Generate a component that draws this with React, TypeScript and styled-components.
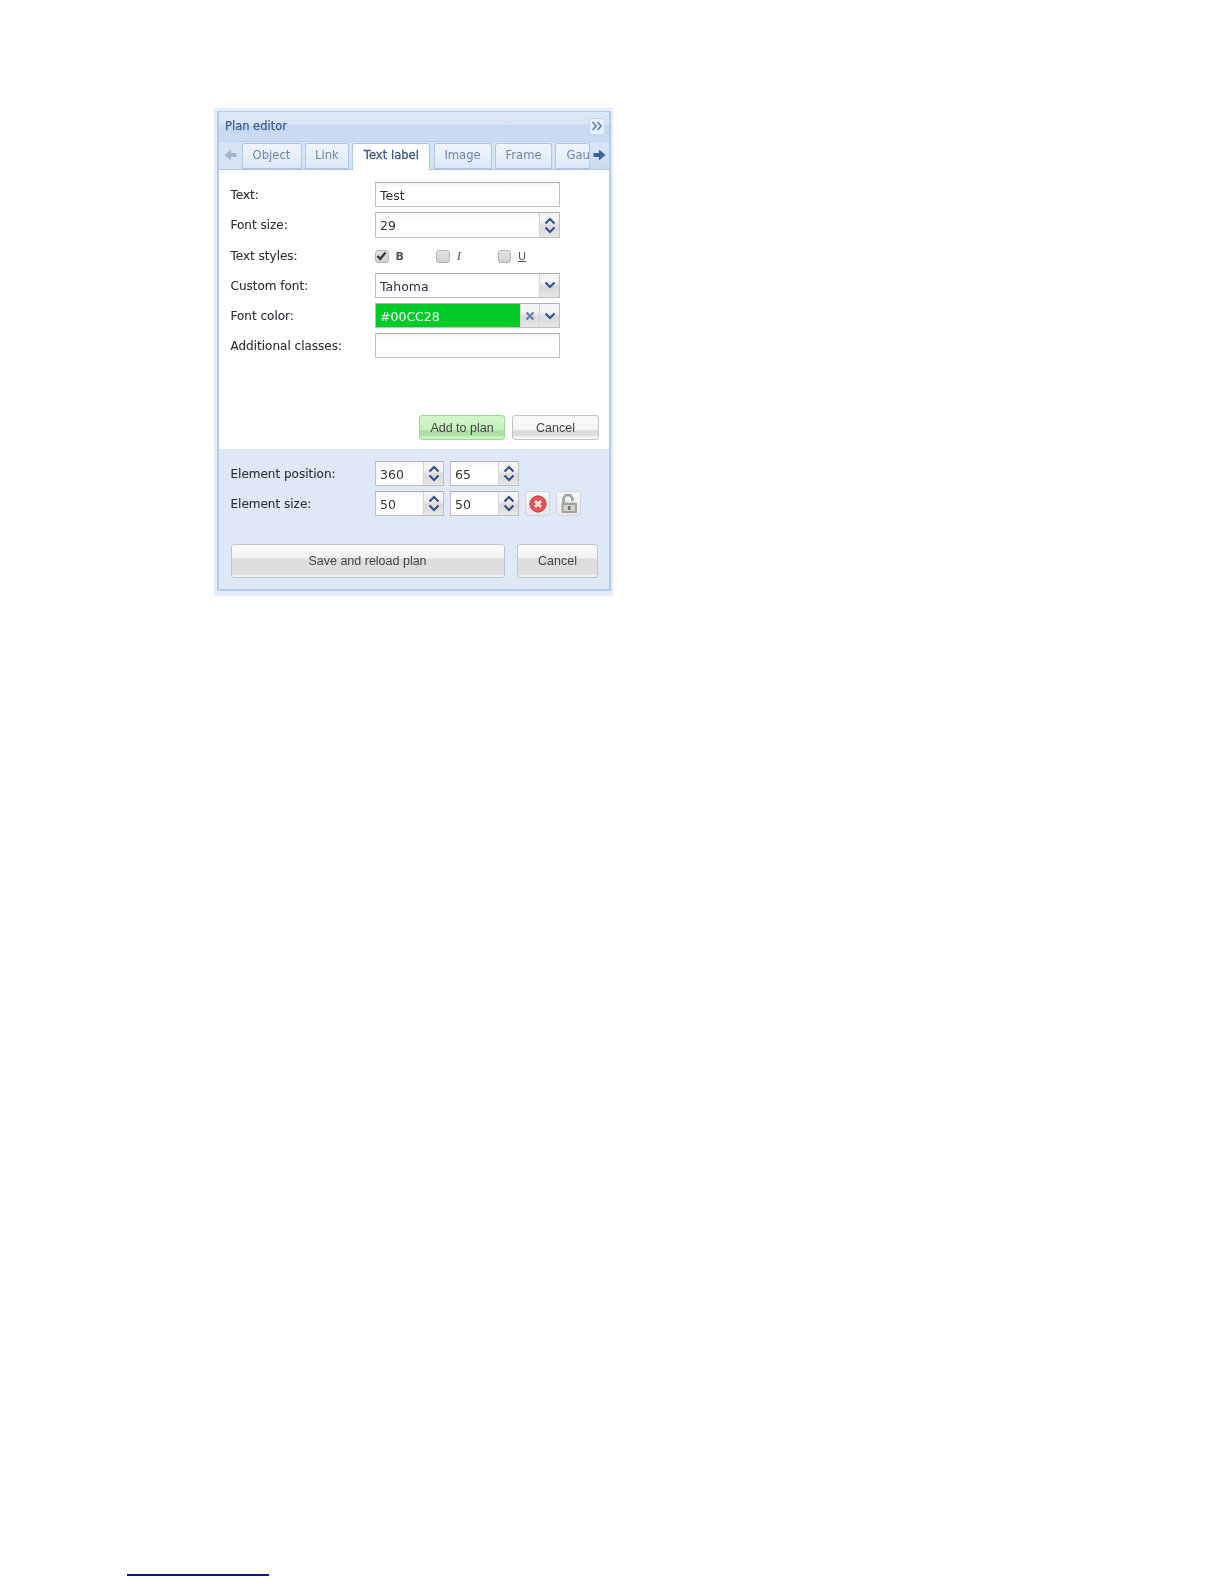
import React from "react";
import styled, { createGlobalStyle } from "styled-components";

const Global = createGlobalStyle`
  html, body { margin: 0; padding: 0; background: #fff; }
  body { font-family: "DejaVu Sans", sans-serif; }
`;

const Page = styled.div`
  width: 1224px;
  height: 1584px;
  padding: 107.5px 0 0 214px;
  box-sizing: border-box;
  position: relative;
  overflow: hidden;
  filter: blur(0.45px);
`;

const Halo = styled.div`
  width: 399px;
  height: 488.5px;
  box-sizing: border-box;
  padding: 3px 2px 5px 3px;
  background: #e4ecf8;
`;

const Panel = styled.div`
  height: 100%;
  box-sizing: border-box;
  border: 2px solid #b4cbea;
  border-top-width: 1px;
  display: flex;
  flex-direction: column;
  background: #fff;
`;

const Header = styled.div`
  height: 29.5px;
  flex: none;
  box-sizing: border-box;
  display: flex;
  align-items: center;
  justify-content: space-between;
  padding: 0 4px 0 6px;
  background: linear-gradient(#dde8f7 0%, #d8e5f6 42%, #c6d8f1 46%, #cbdcf2 100%);
`;

const Title = styled.span`
  font-size: 11.5px;
  color: #3d5f8f;
  -webkit-text-stroke: 0.25px #3d5f8f;
`;

const Collapse = styled.button`
  width: 16px;
  height: 17px;
  padding: 0;
  border: 1px solid #c5d7ee;
  border-radius: 2px;
  background: #e9f1fb;
  display: flex;
  align-items: center;
  justify-content: center;
`;

const TabStrip = styled.div`
  height: 29px;
  flex: none;
  box-sizing: border-box;
  border-top: 1px solid #c2d5ee;
  border-bottom: 1.5px solid #a9c4e8;
  background: #d6e3f5;
  display: flex;
  align-items: flex-end;
`;

const Scroller = styled.div<{ $right?: boolean }>`
  width: ${(p) => (p.$right ? 20 : 22.5)}px;
  height: 100%;
  box-sizing: border-box;
  flex: none;
  padding-bottom: 2px;
  display: flex;
  align-items: center;
  justify-content: center;
  border-left: ${(p) => (p.$right ? "1px solid #b1c9e9" : "none")};
  background: ${(p) => (p.$right ? "linear-gradient(#d9e6f7, #cbdcf2)" : "#d6e3f5")};
`;

const Tabs = styled.div`
  flex: 1;
  min-width: 0;
  display: flex;
  align-items: flex-end;
  gap: 3.2px;
`;

const Tab = styled.div<{ $active?: boolean; $w: number; $last?: boolean }>`
  width: ${(p) => p.$w}px;
  flex: none;
  height: ${(p) => (p.$active ? 28 : 26.5)}px;
  margin-bottom: ${(p) => (p.$active ? -1.5 : 0)}px;
  box-sizing: border-box;
  border: 1px solid #b1c9e9;
  border-bottom: ${(p) => (p.$active ? "none" : "1px solid #a9c4e8")};
  border-right: ${(p) => (p.$last ? "none" : "1px solid #b1c9e9")};
  border-radius: 3px 3px 0 0;
  background: ${(p) => (p.$active ? "#fff" : "linear-gradient(#f0f5fc, #dde8f7)")};
  color: ${(p) => (p.$active ? "#3b5a85" : "#6d87ab")};
  font-size: 11.6px;
  -webkit-text-stroke: ${(p) => (p.$active ? "0.3px #3b5a85" : "0")};
  white-space: nowrap;
  padding-left: ${(p) => (p.$last ? "10px" : "0")};
  text-align: ${(p) => (p.$last ? "left" : "center")};
  line-height: 23px;
`;

const Body = styled.div`
  flex: 1;
  min-height: 0;
  display: flex;
  flex-direction: column;
  padding: 12.3px 10px 8.7px 11.5px;
  background: #fff;
`;

const Form = styled.div`
  display: grid;
  grid-template-columns: 144.5px 185px;
  grid-auto-rows: 25.2px;
  row-gap: 5px;
`;

const Label = styled.div`
  font-size: 12px;
  color: #2b3138;
  -webkit-text-stroke: 0.12px #2b3138;
  line-height: 26px;
  white-space: nowrap;
`;

const Field = styled.div<{ $w?: number }>`
  width: ${(p) => (p.$w ? `${p.$w}px` : "100%")};
  height: 25.2px;
  box-sizing: border-box;
  border: 1px solid #c0c0c0;
  border-top-color: #b0b0b0;
  background: linear-gradient(#f3f3f3, #fff 5px);
  display: flex;
  align-items: stretch;
  flex: none;
`;

const Value = styled.div<{ $fill?: string }>`
  flex: 1;
  min-width: 0;
  padding-left: 4px;
  font-size: 12.5px;
  line-height: 25px;
  color: ${(p) => (p.$fill ? "#fff" : "#333")};
  background: ${(p) => p.$fill ?? "transparent"};
`;

const Side = styled.div<{ $w: number }>`
  width: ${(p) => p.$w}px;
  flex: none;
  box-sizing: border-box;
  border-left: 1px solid #d4d4d4;
  background: linear-gradient(#f4f4f4 35%, #dadada 55%, #e6e6e6);
  display: flex;
  flex-direction: column;
  align-items: center;
  justify-content: center;
  gap: 1px;
`;

const StyleRow = styled.div`
  display: flex;
  align-items: center;
  padding-top: 2px;
`;

const CheckItem = styled.div`
  width: 61.3px;
  display: flex;
  align-items: center;
  gap: 7px;
  font-size: 11px;
  color: #555;
`;

const Box = styled.span`
  width: 13.5px;
  height: 13.5px;
  box-sizing: border-box;
  border: 1px solid #b4b4b4;
  border-radius: 3px;
  background: linear-gradient(#e4e4e4, #d2d2d2);
  display: flex;
  align-items: center;
  justify-content: center;
`;

const ItalicMark = styled.i`
  font-family: "Liberation Serif", serif;
  font-size: 12.5px;
`;

const Actions = styled.div`
  margin-top: auto;
  display: flex;
  justify-content: flex-end;
  gap: 7px;
`;

const Button = styled.button<{ $w: number; $h: number; $green?: boolean; $tall?: boolean }>`
  width: ${(p) => p.$w}px;
  height: ${(p) => p.$h}px;
  padding: ${(p) => (p.$tall ? "0" : "1px 0 0")};
  box-sizing: border-box;
  border: 1px solid ${(p) => (p.$green ? "#9fd596" : "#c4c4c4")};
  border-radius: 3px;
  font: 12.5px "Liberation Sans", Arial, sans-serif;
  color: #444;
  background: ${(p) =>
    p.$green
      ? "linear-gradient(#d2f6ca 0%, #c6f2bc 60%, #a9dfa0 64%, #aee3a5 86%, #c8f4be 90%)"
      : p.$tall
        ? "linear-gradient(#fafafa 0%, #f2f2f2 40%, #dcdcdc 44%, #e0e0e0 92%, #f2f2f2 96%)"
        : "linear-gradient(#fafafa 0%, #f4f4f4 60%, #dadada 64%, #dcdcdc 86%, #f4f4f4 90%)"};
`;

const Footer = styled.div`
  height: 140px;
  flex: none;
  box-sizing: border-box;
  padding: 12px 11px 10.7px 11.5px;
  background: #dfe8f7;
  display: flex;
  flex-direction: column;
`;

const Coord = styled.div`
  display: flex;
  gap: 6px;
  align-items: center;
`;

const FooterForm = styled(Form)`
  grid-template-columns: 144.5px 1fr;
`;

const IconButton = styled.button`
  width: 25px;
  height: 25px;
  padding: 0;
  border: 1px solid #cfd6e0;
  border-radius: 3px;
  background: linear-gradient(#f6f6f6, #e6e8ec);
  display: flex;
  align-items: center;
  justify-content: center;
`;

const FooterActions = styled.div`
  margin-top: auto;
  display: flex;
  gap: 12.5px;
`;

const Rule = styled.div`
  position: absolute;
  left: 127px;
  top: 1574px;
  width: 142px;
  height: 2px;
  background: #14147e;
`;

const Chevron = ({ up }: { up?: boolean }) => (
  <svg width="12" height="8" viewBox="0 0 12 8">
    <path
      d={up ? "M1.5 6.5 6 2l4.5 4.5" : "M1.5 1.5 6 6l4.5-4.5"}
      fill="none"
      stroke="#34508f"
      strokeWidth="2.2"
    />
  </svg>
);

const Spinner = () => (
  <Side $w={20}>
    <Chevron up />
    <Chevron />
  </Side>
);

const Arrow = ({ right }: { right?: boolean }) => (
  <svg width="13" height="12" viewBox="0 0 13 12">
    <path
      d={right ? "M0.5 4H6V0.5L12.5 6 6 11.5V8H0.5z" : "M12.5 4H7V0.5L0.5 6 7 11.5V8h5.5z"}
      fill={right ? "#3f6299" : "#a3b5cc"}
    />
  </svg>
);

const Check = () => (
  <svg width="11" height="10" viewBox="0 0 11 10">
    <path d="M1.5 5 4.2 8 9.5 1.5" fill="none" stroke="#3a3a3a" strokeWidth="2.4" />
  </svg>
);

const Spin = ({ value }: { value: string }) => (
  <Field $w={69}>
    <Value>{value}</Value>
    <Spinner />
  </Field>
);

export default function App() {
  return (
    <Page>
      <Global />
      <Halo>
        <Panel>
          <Header>
            <Title>Plan editor</Title>
            <Collapse aria-label="Collapse">
              <svg width="12" height="10" viewBox="0 0 12 10">
                <path
                  d="M1.5 1 5 5 1.5 9M6.5 1 10 5 6.5 9"
                  fill="none"
                  stroke="#5f86c4"
                  strokeWidth="1.8"
                />
              </svg>
            </Collapse>
          </Header>
          <TabStrip>
            <Scroller>
              <Arrow />
            </Scroller>
            <Tabs>
              <Tab $w={60}>Object</Tab>
              <Tab $w={44.5}>Link</Tab>
              <Tab $w={78} $active>
                Text label
              </Tab>
              <Tab $w={58}>Image</Tab>
              <Tab $w={57.5}>Frame</Tab>
              <Tab $w={34} $last>
                Gau
              </Tab>
            </Tabs>
            <Scroller $right>
              <Arrow right />
            </Scroller>
          </TabStrip>
          <Body>
            <Form>
              <Label>Text:</Label>
              <Field>
                <Value>Test</Value>
              </Field>
              <Label>Font size:</Label>
              <Field>
                <Value>29</Value>
                <Spinner />
              </Field>
              <Label>Text styles:</Label>
              <StyleRow>
                <CheckItem>
                  <Box>
                    <Check />
                  </Box>
                  <b>B</b>
                </CheckItem>
                <CheckItem>
                  <Box />
                  <ItalicMark>I</ItalicMark>
                </CheckItem>
                <CheckItem>
                  <Box />
                  <u>U</u>
                </CheckItem>
              </StyleRow>
              <Label>Custom font:</Label>
              <Field>
                <Value>Tahoma</Value>
                <Side $w={20}>
                  <Chevron />
                </Side>
              </Field>
              <Label>Font color:</Label>
              <Field>
                <Value $fill="#00CC28">#00CC28</Value>
                <Side $w={19.5}>
                  <svg width="10" height="10" viewBox="0 0 10 10">
                    <path d="M1.5 1.5l7 7M8.5 1.5l-7 7" stroke="#5b7fb5" strokeWidth="2.2" />
                  </svg>
                </Side>
                <Side $w={20}>
                  <Chevron />
                </Side>
              </Field>
              <Label>Additional classes:</Label>
              <Field />
            </Form>
            <Actions>
              <Button $w={86} $h={25} $green>
                Add to plan
              </Button>
              <Button $w={87} $h={25}>
                Cancel
              </Button>
            </Actions>
          </Body>
          <Footer>
            <FooterForm>
              <Label>Element position:</Label>
              <Coord>
                <Spin value="360" />
                <Spin value="65" />
              </Coord>
              <Label>Element size:</Label>
              <Coord>
                <Spin value="50" />
                <Spin value="50" />
                <IconButton aria-label="Remove">
                  <svg width="18" height="18" viewBox="0 0 18 18">
                    <circle cx="9" cy="9" r="8.5" fill="#e2545c" />
                    <circle cx="9" cy="9" r="8" fill="none" stroke="#c9404a" strokeWidth="0.8" />
                    <path d="M6 6l6 6M12 6l-6 6" stroke="#fbe3e3" strokeWidth="2.8" />
                  </svg>
                </IconButton>
                <IconButton aria-label="Unlock">
                  <svg width="18" height="20" viewBox="0 0 18 20">
                    <path
                      d="M3.5 9V5.5a4.5 4.5 0 0 1 9 0V7"
                      fill="none"
                      stroke="#9aa09a"
                      strokeWidth="2.6"
                    />
                    <rect x="1.5" y="8.5" width="15.5" height="10.5" rx="1" fill="#a0a5a0" />
                    <rect x="3.5" y="11" width="11.5" height="6" fill="#cfd2cd" />
                    <rect x="8" y="12" width="2.5" height="4" fill="#6f746f" />
                  </svg>
                </IconButton>
              </Coord>
            </FooterForm>
            <FooterActions>
              <Button $w={274} $h={34} $tall>
                Save and reload plan
              </Button>
              <Button $w={81} $h={34} $tall>
                Cancel
              </Button>
            </FooterActions>
          </Footer>
        </Panel>
      </Halo>
      <Rule />
    </Page>
  );
}
